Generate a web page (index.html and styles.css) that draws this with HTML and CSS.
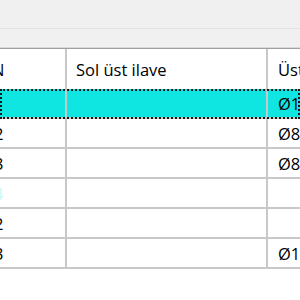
FILE: index.html
```
<!DOCTYPE html>
<html>
<head>
<meta charset="utf-8">
<link rel="stylesheet" href="styles.css">
</head>
<body>
<div class="toolbar"></div>
<div class="strip"></div>
<div class="grid">
  <div class="row head">
    <div class="cell c1"><span class="clip-n">N</span></div>
    <div class="cell c2">Sol üst ilave</div>
    <div class="cell c3">Üst</div>
  </div>
  <div class="row sel">
    <div class="cell c1"></div>
    <div class="cell c2"></div>
    <div class="cell c3">Ø1</div>
  </div>
  <div class="row">
    <div class="cell c1"><span class="clip-d">2</span></div>
    <div class="cell c2"></div>
    <div class="cell c3">Ø8</div>
  </div>
  <div class="row">
    <div class="cell c1"><span class="clip-d">3</span></div>
    <div class="cell c2"></div>
    <div class="cell c3">Ø8</div>
  </div>
  <div class="row">
    <div class="cell c1"><span class="clip-d pale">4</span></div>
    <div class="cell c2"></div>
    <div class="cell c3"></div>
  </div>
  <div class="row">
    <div class="cell c1"><span class="clip-d">2</span></div>
    <div class="cell c2"></div>
    <div class="cell c3"></div>
  </div>
  <div class="row">
    <div class="cell c1"><span class="clip-d">3</span></div>
    <div class="cell c2"></div>
    <div class="cell c3">Ø1</div>
  </div>
</div>
</body>
</html>
```
FILE: styles.css
```
html, body {
  margin: 0;
  padding: 0;
  background: #ffffff;
  width: 300px;
  height: 300px;
  overflow: hidden;
  font-family: "Open Sans", "Liberation Sans", sans-serif;
  font-size: 16.5px;
  color: #000000;
}
.toolbar {
  height: 28px;
  background: #f0f0f0;
  border-bottom: 1px solid #e3e3e3;
}
.strip {
  height: 18px;
  background: #f0f0f0;
  border-bottom: 1px solid #d9d9d9;
  box-shadow: 0 1px 0 #a0a0a0;
  margin-bottom: 1px;
}
.grid {
  display: flex;
  flex-direction: column;
}
.row {
  display: flex;
  height: 28px;
  border-bottom: 2px solid #c8c8c8;
}
.row.head {
  height: 40px;
  border-bottom: none;
}
.cell {
  display: flex;
  align-items: center;
  overflow: hidden;
  white-space: nowrap;
  box-sizing: border-box;
}
.c1 {
  width: 67px;
  border-right: 2px solid #c8c8c8;
}
.c2 {
  width: 201px;
  border-right: 2px solid #c8c8c8;
  padding-left: 9px;
}
.c3 {
  flex: 1;
  padding-left: 10px;
}
.sel {
  background: #10e6e1;
  outline: 2px dotted #1a1a1a;
  outline-offset: -2px;
}
.clip-n {
  margin-left: -8px;
}
.clip-d {
  margin-left: -6px;
}
.pale {
  color: #c6fbfb;
}
```
